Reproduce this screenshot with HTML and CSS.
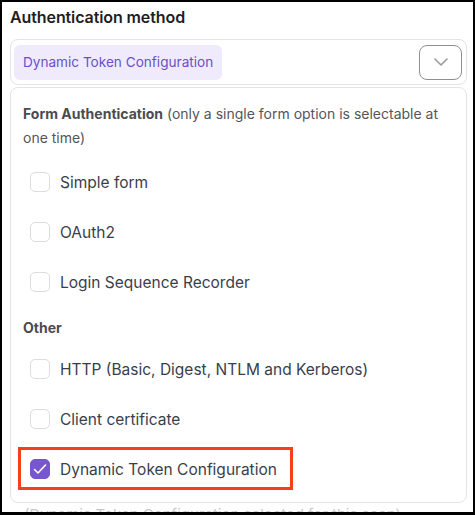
FILE: index.html
```html
<!DOCTYPE html>
<html lang="en">
<head>
<meta charset="utf-8">
<title>Authentication method</title>
<link rel="stylesheet" href="styles.css">
</head>
<body>
<div class="frame">
  <div class="content">
    <h2 class="title">Authentication method</h2>
    <div class="select">
      <span class="chip">Dynamic Token Configuration</span>
      <button class="toggle" type="button" aria-label="Toggle">
        <svg width="14" height="8" viewBox="0 0 14 8"><path d="M1 1l6 6 6-6" fill="none" stroke="#9a9a9a" stroke-width="1.6" stroke-linecap="round" stroke-linejoin="round"/></svg>
      </button>
    </div>
    <div class="panel">
      <p class="group first"><b>Form Authentication</b> (only a single form option is selectable at one time)</p>
      <ul class="options">
        <li class="option"><span class="box"></span><span class="label">Simple form</span></li>
        <li class="option"><span class="box"></span><span class="label">OAuth2</span></li>
        <li class="option"><span class="box"></span><span class="label">Login Sequence Recorder</span></li>
      </ul>
      <p class="group other"><b>Other</b></p>
      <ul class="options">
        <li class="option"><span class="box"></span><span class="label">HTTP (Basic, Digest, NTLM and Kerberos)</span></li>
        <li class="option"><span class="box"></span><span class="label">Client certificate</span></li>
        <li class="option highlighted">
          <span class="box checked"><svg width="14" height="12" viewBox="0 0 14 12"><path d="M1.5 6.5l3.5 3.5 7.5-8" fill="none" stroke="#fff" stroke-width="1.6" stroke-linecap="round" stroke-linejoin="round"/></svg></span>
          <span class="label">Dynamic Token Configuration</span>
          <span class="annot"></span>
        </li>
      </ul>
    </div>
    <div class="below">(Dynamic Token Configuration selected for this scan)</div>
  </div>
</div>
</body>
</html>
```

FILE: styles.css
```css
* { box-sizing: border-box; }
html, body { margin: 0; padding: 0; background: #fff; }
body { font-family: Inter, "Open Sans", sans-serif; }
.frame {
  width: 475px;
  height: 515px;
  border: 2px solid #000;
  border-bottom-width: 3px;
  overflow: hidden;
  background: #fff;
}
.content { padding: 5px 6px 0 8px; }
.title {
  margin: 0 0 12px 0;
  font-size: 16px;
  line-height: 20px;
  font-weight: 600;
  color: #1e1e22;
  letter-spacing: -0.1px;
}
.select {
  width: 457px;
  height: 46px;
  border: 1px solid #e4e4e7;
  border-radius: 8px;
  display: flex;
  align-items: center;
  justify-content: space-between;
  padding: 0 4px 0 3px;
}
.chip {
  height: 35px;
  display: flex;
  align-items: center;
  padding: 0 9px;
  background: #efebfc;
  color: #6a4fcc;
  border-radius: 6px;
  font-size: 13.6px;
}
.toggle {
  width: 43px;
  height: 35px;
  border: 1px solid #8f8f8f;
  border-radius: 8px;
  background: #fff;
  display: flex;
  align-items: center;
  justify-content: center;
  padding: 0;
}
.panel {
  margin-top: 2px;
  width: 457px;
  height: 416px;
  border: 1px solid #e4e4e7;
  border-radius: 8px;
  padding: 14px 18px 7px 12px;
}
.group {
  margin: 0;
  font-size: 14px;
  line-height: 24px;
  color: #55555a;
}
.group b { font-weight: 700; color: #4b4b50; }
.group.other { margin: 9px 0 4px 0; }
.options { list-style: none; margin: 0; padding: 0; }
.group.first + .options { margin-top: 7px; }
.option {
  position: relative;
  height: 50px;
  display: flex;
  align-items: center;
  padding-left: 7px;
  gap: 10px;
}
.box {
  width: 20px;
  height: 20px;
  border: 1px solid #dcdcde;
  border-radius: 5px;
  flex: none;
  display: flex;
  align-items: center;
  justify-content: center;
}
.box.checked { background: #7756cf; border-color: #7756cf; }
.label {
  font-size: 15.5px;
  color: #3a3e4c;
  white-space: nowrap;
}
.annot {
  position: absolute;
  left: -5px;
  top: 3px;
  width: 275px;
  height: 43px;
  border: 3px solid #f5401b;
}
.below {
  margin: 2px 0 0 14px;
  font-size: 15px;
  color: #c8c8cc;
  line-height: 20px;
}
```
